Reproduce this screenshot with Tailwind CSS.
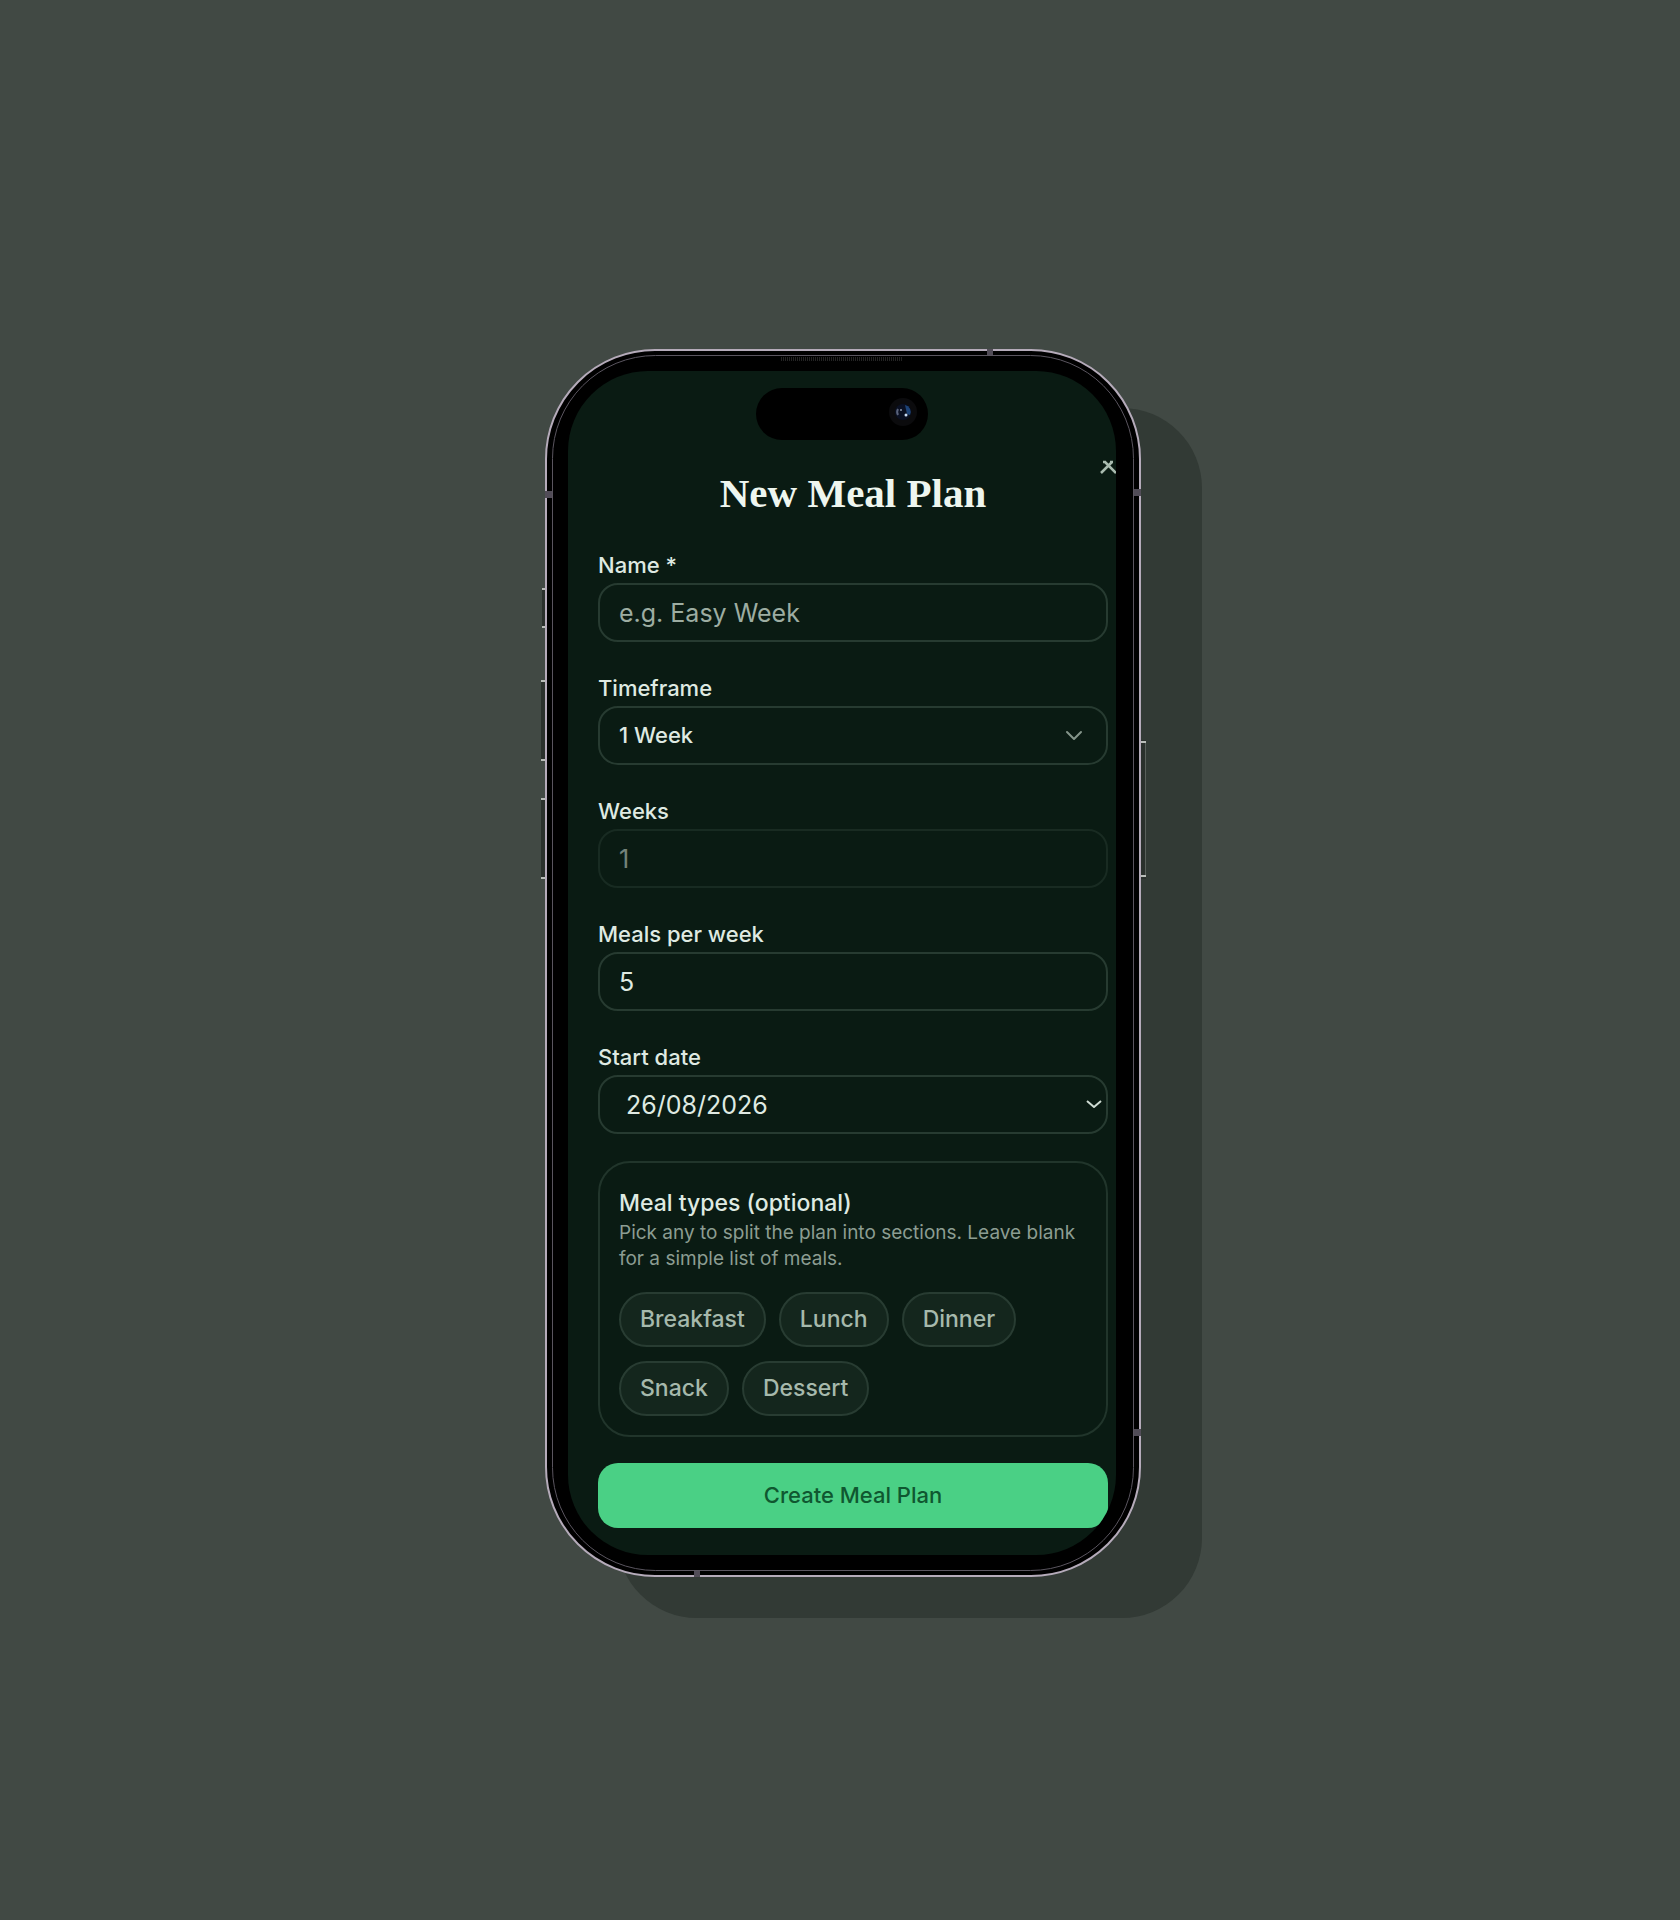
<!DOCTYPE html>
<html lang="en">
<head>
  <meta charset="UTF-8" />
  <meta name="viewport" content="width=device-width, initial-scale=1.0" />
  <title>New Meal Plan</title>
  <script src="https://cdn.jsdelivr.net/npm/@tailwindcss/browser@4"></script>
</head>
<body class="bg-[#414944] min-h-screen flex items-center justify-center pl-[6px] pt-[6px] font-['Inter',sans-serif] text-[#dfeae2]">
  <div class="relative w-[594px] py-[22px] pl-[22px] pr-[24px]">
    <!-- Phone body -->
    <svg class="absolute inset-0 w-full h-full overflow-visible" viewBox="0 0 594 1228" fill="none" aria-hidden="true">
      <rect x="71" y="59" width="585" height="1210" rx="80" fill="#323a35" />
      <!-- side buttons -->
      <g fill="#2a302c">
        <rect x="-4" y="239" width="6" height="40" />
        <rect x="-5" y="331" width="7" height="81" />
        <rect x="-5" y="449" width="7" height="81" />
        <rect x="593" y="391" width="7" height="139" />
      </g>
      <path d="M-4 240h4M-4 278h4M-5 332h5M-5 411h5M-5 450h5M-5 529h5M595 393h5M595 527h5" stroke="#b9bdb9" stroke-width="2" />
      <path d="M599.500 394v132" stroke="#59605b" />
      <rect x="0" y="1" width="594" height="1226" rx="109" fill="#000" stroke="#b5abba" stroke-width="2" />
      <rect x="6.500" y="6.500" width="581" height="1215" rx="103" stroke="#5a555f" />
      <!-- antenna bands -->
      <g fill="#514c57">
        <rect x="-1" y="142" width="7" height="7" />
        <rect x="588" y="140" width="7" height="7" />
        <rect x="441" y="0" width="6" height="6" />
        <rect x="148" y="1222" width="6" height="6" />
        <rect x="588" y="1080" width="7" height="7" />
      </g>
      <path d="M235 10h121" stroke="#232323" stroke-width="4" stroke-dasharray="1 1" />
    </svg>

    <main class="relative overflow-hidden rounded-[80px] bg-[#0a1b13] pt-[100px] pb-[27px] pl-[30px] pr-[8px]">
      <!-- Dynamic island -->
      <div class="absolute top-[17px] left-[188px] w-[172px] h-[52px] rounded-full bg-black">
        <svg class="absolute right-[10px] top-[9px] w-[30px] h-[30px]" viewBox="0 0 30 30" aria-hidden="true">
          <circle cx="15" cy="15" r="14" fill="#0b0b0d" />
          <circle cx="15" cy="15" r="8" fill="#0a1022" />
          <path d="M17 8a7 7 0 0 1 5 10l-3-1z" fill="#1d4377" />
          <path d="M10 18a6 6 0 0 1 0-6" stroke="#59627a" stroke-width="2" fill="none" />
          <circle cx="18" cy="18" r="1.500" fill="#c9dcf5" />
          <circle cx="13" cy="13" r="1" fill="#8c97ab" />
        </svg>
      </div>
      <button type="button" aria-label="Close" class="absolute top-[88px] -right-px w-[18px] h-[18px]">
        <svg viewBox="0 0 18 18" fill="none" stroke="#a9bbaf" stroke-width="2.500">
          <path d="M4 3h3M11 3h3M6 3l11 11M13 3L2 14" />
        </svg>
      </button>

      <h1 class="text-center font-['Liberation_Serif',serif] font-bold text-[41px] leading-[44px] text-[#eef6ef]">New Meal Plan</h1>

      <form class="mt-[36px]">
        <div class="flex flex-col gap-8">
          <div class="flex flex-col gap-1">
            <label for="name" class="text-[22px] leading-[28px] font-medium">Name *</label>
            <input id="name" type="text" placeholder="e.g. Easy Week" class="w-full h-[59px] rounded-[20px] border-2 border-[#273b31] px-[19px] text-[25px] placeholder:text-[#9dada2]" />
          </div>
          <div class="flex flex-col gap-1">
            <label for="timeframe" class="text-[22px] leading-[28px] font-medium">Timeframe</label>
            <div class="relative">
              <select id="timeframe" class="block appearance-none w-full h-[59px] rounded-[20px] border-2 border-[#273b31] px-[19px] text-[22px] font-medium">
                <option>1 Week</option>
              </select>
              <svg class="absolute right-[24px] top-[23px] w-[20px] h-[12px] pointer-events-none" viewBox="0 0 20 12" fill="none" stroke="#84958a" stroke-width="2" stroke-linecap="round" stroke-linejoin="round">
                <path d="M3 3l7 7 7-7" />
              </svg>
            </div>
          </div>
          <div class="flex flex-col gap-1">
            <label for="weeks" class="text-[22px] leading-[28px] font-medium">Weeks</label>
            <input id="weeks" type="text" inputmode="numeric" value="1" disabled class="w-full h-[59px] rounded-[20px] border-2 border-[#273b31] px-[19px] text-[25px] opacity-50" />
          </div>
          <div class="flex flex-col gap-1">
            <label for="meals" class="text-[22px] leading-[28px] font-medium">Meals per week</label>
            <input id="meals" type="text" inputmode="numeric" value="5" class="w-full h-[59px] rounded-[20px] border-2 border-[#273b31] px-[19px] text-[25px]" />
          </div>
          <div class="flex flex-col gap-1">
            <label for="start" class="text-[22px] leading-[28px] font-medium">Start date</label>
            <div class="relative">
              <input id="start" type="text" value="26/08/2026" class="block w-full h-[59px] rounded-[20px] border-2 border-[#273b31] px-[26px] text-[25px]" />
              <svg class="absolute right-[4px] top-[23px] w-[20px] h-[12px] pointer-events-none" viewBox="0 0 20 12" fill="none" stroke="#cfdcd3" stroke-width="2" stroke-linejoin="round">
                <path d="M3 3l7 6 7-6" />
              </svg>
            </div>
          </div>
        </div>

        <fieldset class="mt-[27px] rounded-[32px] border-2 border-[#21352b] px-[19px] pt-[26px] pb-[19px]">
          <h2 class="text-[23px] leading-[28px] font-medium">Meal types (optional)</h2>
          <p class="mt-[3px] text-[19px] leading-[26px] text-[#8c9d92]">Pick any to split the plan into sections. Leave blank for a simple list of meals.</p>
          <div class="mt-5 flex flex-wrap gap-x-[13px] gap-y-[14px] text-[23px] font-medium text-[#a6b9ac]">
            <button type="button" class="h-[55px] rounded-full border-2 border-[#283c32] bg-[#14261d] px-[19px]">Breakfast</button>
            <button type="button" class="h-[55px] rounded-full border-2 border-[#283c32] bg-[#14261d] px-[19px]">Lunch</button>
            <button type="button" class="h-[55px] rounded-full border-2 border-[#283c32] bg-[#14261d] px-[19px]">Dinner</button>
            <button type="button" class="h-[55px] rounded-full border-2 border-[#283c32] bg-[#14261d] px-[19px]">Snack</button>
            <button type="button" class="h-[55px] rounded-full border-2 border-[#283c32] bg-[#14261d] px-[19px]">Dessert</button>
          </div>
        </fieldset>

        <button type="submit" class="mt-[26px] block w-full h-[65px] rounded-[20px] bg-[#4ad085] text-[22px] font-medium text-[#0f5730]">Create Meal Plan</button>
      </form>
    </main>
  </div>
</body>
</html>
